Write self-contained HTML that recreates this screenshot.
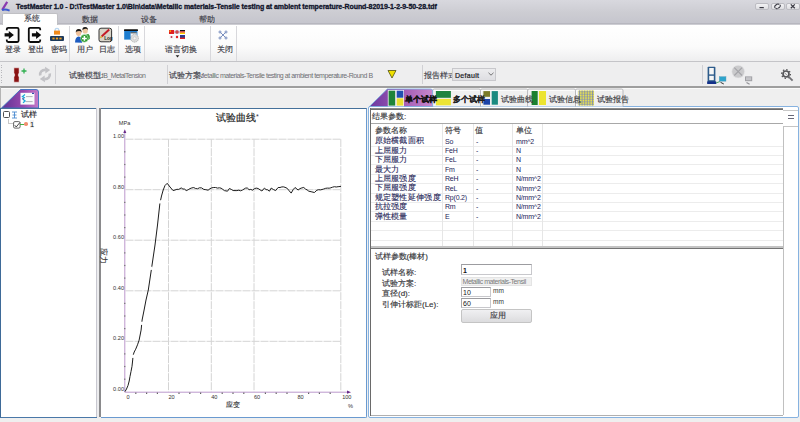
<!DOCTYPE html>
<html><head><meta charset="utf-8">
<style>
*{box-sizing:border-box;margin:0;padding:0}
html,body{width:800px;height:422px;overflow:hidden;background:#f0f0f0;font-family:"Liberation Sans",sans-serif;color:#222}
.a{position:absolute}
.t{position:absolute;white-space:nowrap;line-height:1}
#title{left:0;top:0;width:800px;height:25px;background:linear-gradient(#d8d8de 0px,#cdcdd3 12px,#c6c6ce 22.5px,#b6b6be 23px,#b8b8c0 24px,#e2e2e6 25px)}
#tabrow{display:none}
#ribbon{left:0;top:25px;width:800px;height:37px;background:linear-gradient(#ffffff 0%,#fbfbfb 60%,#eeeeef 100%);border-bottom:1px solid #c4c4c8}
#tool{left:0;top:62px;width:800px;height:24px;background:#eeeeef}
#main{left:0;top:85.5px;width:800px;height:336.5px;background:#efefef;border-top:2px solid #9e9e9e}
.sep{position:absolute;width:1px;background:#d8d8dc}
.cj{font-size:8px;letter-spacing:0px;color:#3c3c46;-webkit-text-stroke:0.15px #3c3c46}
.rt{font-size:7px;letter-spacing:-0.2px;color:#1c1c58}
.inp{border:1px solid #c8c8cc;border-top:1.6px solid #9c9ca0;border-left:1.3px solid #a8a8ac;background:#fff}
.lbl{font-size:7px;color:#333}
.wbtn{position:absolute;top:2.6px;height:7px;border:1px solid #bcbcc2;border-radius:2px;background:linear-gradient(#f2f2f4,#dedee2)}
</style></head><body>

<!-- title bar -->
<div id="title" class="a"></div>
<svg class="a" style="left:1px;top:1px" width="10" height="11" viewBox="0 0 10 11">
<path d="M6.2 0.8 L1.2 8.8" fill="none" stroke="#8a3ab0" stroke-width="2.2"/>
<path d="M1 9.2 Q4 7.6 8.6 9.6" fill="none" stroke="#3a5ad0" stroke-width="1.8"/>
</svg>
<div class="t" style="left:16px;top:3px;font-size:7px;font-weight:bold;color:#10142a;letter-spacing:-0.056px;-webkit-text-stroke:0.3px #10142a">TestMaster 1.0 - D:\TestMaster 1.0\Bin\data\Metallic materials-Tensile testing at ambient temperature-Round-82019-1-2-9-50-28.tdf</div>
<div class="wbtn" style="left:754.5px;width:14px"></div>
<div class="wbtn" style="left:770.5px;width:14px"></div>
<div class="wbtn" style="left:786px;width:14px"></div>
<svg class="a" style="left:754px;top:2px" width="46" height="10" viewBox="754 2 46 10">
<path d="M759.5 7.6 H763.8" stroke="#3a3a44" stroke-width="1.2"/>
<path d="M775.2 7.8 Q774 6.5 775.6 5.3 L777 4.3 Q778.4 3.6 779.3 4.6 M777.6 8.4 Q776.6 9.2 775.6 8.2 M780 4.8 Q781 6 779.6 7.2 L778.2 8.2" fill="none" stroke="#3a3a44" stroke-width="1.1"/>
<path d="M790.8 4.4 L794.8 8.2 M794.8 4.4 L790.8 8.2" stroke="#3a3a44" stroke-width="1.3"/>
</svg>

<!-- tab row -->
<div id="tabrow" class="a"></div>
<div class="a" style="left:2px;top:13px;width:56px;height:13px;background:#fff;border:1px solid #c0c0c4;border-bottom:none;border-radius:2px 2px 0 0"></div>
<div class="t cj" style="left:24px;top:15px">系统</div>
<div class="t cj" style="left:82px;top:16px">数据</div>
<div class="t cj" style="left:141px;top:16px">设备</div>
<div class="t cj" style="left:199px;top:16px">帮助</div>

<!-- ribbon -->
<div id="ribbon" class="a"></div>
<div class="sep" style="left:69px;top:26px;height:35px"></div>
<div class="sep" style="left:118px;top:26px;height:35px"></div>
<div class="sep" style="left:144px;top:26px;height:35px"></div>
<div class="sep" style="left:210px;top:26px;height:35px"></div>
<div class="sep" style="left:236px;top:26px;height:35px"></div>


<!-- ribbon icons -->
<svg class="a" style="left:4px;top:26px" width="17" height="18" viewBox="0 0 17 18">
<path d="M2.8 4.2 V3 Q2.8 1.8 4.2 1.8 H13.2 Q14.6 1.8 14.6 3.2 V14.6 Q14.6 16 13.2 16 H4.2 Q2.8 16 2.8 14.6 V13.4" fill="none" stroke="#0c0c0c" stroke-width="1.8"/>
<path d="M0.6 7.3 H4.8 V4.9 L9.9 8.9 L4.8 12.9 V10.5 H0.6 Z" fill="#0c0c0c"/>
</svg>
<svg class="a" style="left:27px;top:26px" width="17" height="18" viewBox="0 0 17 18">
<path d="M13.2 4.2 V3 Q13.2 1.8 11.8 1.8 H3.2 Q1.8 1.8 1.8 3.2 V14.6 Q1.8 16 3.2 16 H11.8 Q13.2 16 13.2 14.6 V13.4" fill="none" stroke="#0c0c0c" stroke-width="1.8"/>
<path d="M4.9 7.3 H9.1 V4.9 L14.2 8.9 L9.1 12.9 V10.5 H4.9 Z" fill="#0c0c0c"/>
</svg>
<svg class="a" style="left:49px;top:26px" width="16" height="16" viewBox="0 0 16 16">
<path d="M6.2 5 V4 Q6.2 2.4 8 2.4 Q9.8 2.4 9.8 4 V5" fill="none" stroke="#bcd8f0" stroke-width="1.3"/>
<rect x="5" y="4.6" width="6" height="4" fill="#f08a1c"/>
<rect x="1" y="10" width="14" height="5" rx="1" fill="#1c3a5c"/>
<rect x="3.4" y="11.6" width="2.2" height="1.8" fill="#f5a020"/>
<rect x="6.9" y="11.6" width="2.2" height="1.8" fill="#f5a020"/>
<rect x="10.4" y="11.6" width="2.2" height="1.8" fill="#f5a020"/>
</svg>
<svg class="a" style="left:72px;top:25px" width="22" height="20" viewBox="72 25 22 20">
<path d="M84 38 Q86 33.5 88.5 34 Q90.5 35.5 89.8 39 L88 40 Z" fill="#3aa03a"/>
<ellipse cx="85.2" cy="30.4" rx="2.6" ry="3.2" fill="#eec8a0"/>
<path d="M82.4 30 Q82.2 26.8 85.2 26.9 Q88.2 27 88 30.2 L87.2 29 Q85 28.4 83.2 29.4 Z" fill="#1a1a1a"/>
<path d="M75 42.5 Q75.2 37 78.6 36.6 Q82 37 82.6 40.5 L82 42.8 Z" fill="#1e5cc0"/>
<ellipse cx="78.6" cy="32.6" rx="2.7" ry="3.4" fill="#eec09a"/>
<path d="M75.8 32.4 Q75.6 28.8 78.8 28.9 Q82 29 81.6 32.8 L80.8 31.2 Q78.5 30.4 76.6 31.6 Z" fill="#1a1a1a"/>
<circle cx="84.4" cy="38.4" r="3.8" fill="#2a9a2a" stroke="#dff2df" stroke-width="0.5"/>
<path d="M84.4 36 V40.8 M82 38.4 H86.8" stroke="#fff" stroke-width="1.5"/>
</svg>
<svg class="a" style="left:98px;top:27px" width="15" height="16" viewBox="0 0 15 16">
<rect x="1" y="1.2" width="12.6" height="13.6" rx="2" fill="#d8d4c8" stroke="#333" stroke-width="1"/>
<path d="M3.6 9.6 L11.2 2.6" stroke="#c41c28" stroke-width="2"/>
<path d="M2.4 10.8 L3.8 9.4" stroke="#e0b030" stroke-width="1.6"/>
<text x="6.2" y="12.8" font-size="4.6" font-family="Liberation Sans" font-weight="bold" fill="#222">Log</text>
</svg>
<svg class="a" style="left:123px;top:28px" width="16" height="16" viewBox="0 0 16 16">
<rect x="1" y="1.2" width="14" height="1.8" rx="0.6" fill="#111"/>
<rect x="1.2" y="3" width="13.2" height="8.6" fill="#1f7ed0"/>
<rect x="7.6" y="4.4" width="6" height="4.4" fill="#f2f6fa"/>
<rect x="7.6" y="4.4" width="6" height="0.9" fill="#333"/>
<circle cx="11.6" cy="10.3" r="3.9" fill="#dcdcdc" stroke="#a8a8a8" stroke-width="0.7" stroke-dasharray="1.2 0.6"/>
<circle cx="11.6" cy="10.3" r="1.5" fill="#f4f4f4" stroke="#b8b8b8" stroke-width="0.5"/>
</svg>
<svg class="a" style="left:168px;top:29px" width="18" height="11" viewBox="0 0 18 11">
<rect x="1" y="1" width="5" height="4" fill="#e02020"/><rect x="1.5" y="1.5" width="1.5" height="1.2" fill="#ffd000"/>
<rect x="6.5" y="1" width="5" height="4" fill="#c8d0e8"/><path d="M6.5 3 H11.5 M9 1 V5" stroke="#d02020" stroke-width="1"/>
<rect x="12" y="1" width="5" height="1.4" fill="#111"/><rect x="12" y="2.4" width="5" height="1.3" fill="#e02020"/><rect x="12" y="3.7" width="5" height="1.3" fill="#ffd000"/>
<rect x="1" y="6" width="5" height="4" fill="#f8f8f8"/><circle cx="3.5" cy="8" r="1" fill="#c03050"/>
<rect x="6.5" y="6" width="5" height="4" fill="#f8f8f8"/><circle cx="9" cy="8" r="1.2" fill="#e02020"/>
<rect x="12" y="6" width="5" height="4" fill="#2a3a90"/><rect x="12" y="8.6" width="5" height="1.4" fill="#e02020"/>
</svg>
<svg class="a" style="left:174.5px;top:54.5px" width="5" height="3" viewBox="0 0 5 3"><path d="M0.6 0.3 H4.4 L2.5 2.6Z" fill="#222"/></svg>
<svg class="a" style="left:218px;top:30px" width="10" height="10" viewBox="0 0 10 10">
<path d="M2.6 2.6 L7.4 7.4 M7.4 2.6 L2.6 7.4" stroke="#5a74b0" stroke-width="0.8"/>
<circle cx="2" cy="2" r="1.05" fill="none" stroke="#5a74b0" stroke-width="0.75"/>
<circle cx="8" cy="2" r="1.05" fill="none" stroke="#5a74b0" stroke-width="0.75"/>
<circle cx="2" cy="8" r="1.05" fill="none" stroke="#5a74b0" stroke-width="0.75"/>
<circle cx="8" cy="8" r="1.05" fill="none" stroke="#5a74b0" stroke-width="0.75"/>
</svg>
<div class="t cj" style="left:5px;top:46px">登录</div>
<div class="t cj" style="left:28px;top:46px">登出</div>
<div class="t cj" style="left:51px;top:46px">密码</div>
<div class="t cj" style="left:77px;top:46px">用户</div>
<div class="t cj" style="left:99px;top:46px">日志</div>
<div class="t cj" style="left:125px;top:46px">选项</div>
<div class="t cj" style="left:165px;top:46px">语言切换</div>
<div class="t cj" style="left:217px;top:46px">关闭</div>

<!-- toolbar -->
<div id="tool" class="a"></div>
<div class="sep" style="left:55px;top:65px;height:19px;background:#d0d0d4"></div>
<div class="sep" style="left:167px;top:65px;height:19px;background:#d0d0d4"></div>
<div class="sep" style="left:422px;top:65px;height:19px;background:#d0d0d4"></div>
<div class="sep" style="left:702px;top:65px;height:19px;background:#d0d0d4"></div>


<!-- toolbar content -->
<div class="a" style="left:1px;top:65px;width:1px;height:18px;background:repeating-linear-gradient(#b8b8bc 0 1px,transparent 1px 2.5px)"></div>
<svg class="a" style="left:13px;top:67px" width="7" height="16" viewBox="0 0 7 16">
<path d="M0.9 0.8 H6.1 V5.8 Q4.3 8 6.1 10.2 V15.2 H0.9 V10.2 Q2.7 8 0.9 5.8 Z" fill="#8a1212" stroke="#ffffff" stroke-width="0.5"/>
</svg>
<svg class="a" style="left:21px;top:68px" width="6" height="6" viewBox="0 0 6 6"><path d="M3 0.5 V5.5 M0.5 3 H5.5" stroke="#30b050" stroke-width="1.3"/></svg>
<svg class="a" style="left:38px;top:65.5px" width="14" height="17" viewBox="0 0 14 17">
<path d="M2.2 9.5 Q1.6 4.2 7.6 3.8" fill="none" stroke="#c2c2c6" stroke-width="2.6"/>
<path d="M7 0.8 L12.2 4 L7.4 7.6 Z" fill="#c2c2c6"/>
<path d="M11.8 7.5 Q12.4 12.8 6.4 13.2" fill="none" stroke="#c2c2c6" stroke-width="2.6"/>
<path d="M7 16.2 L1.8 13 L6.6 9.4 Z" fill="#c2c2c6"/>
</svg>
<div class="t cj" style="left:69px;top:72px;color:#3a3a46">试验模型:</div>
<div class="t" style="left:98.5px;top:71.5px;font-size:7px;letter-spacing:-0.55px;color:#6e6e74">LIB_MetalTension</div>
<div class="t cj" style="left:169px;top:72px;color:#3a3a46">试验方案:</div>
<div class="t" style="left:198.5px;top:71.5px;font-size:7px;letter-spacing:-0.47px;color:#6e6e74">Metallic materials-Tensile testing at ambient temperature-Round B</div>
<svg class="a" style="left:387px;top:69px" width="10" height="10" viewBox="0 0 10 10"><path d="M1 1.5 H9 L5 9 Z" fill="#f0e000" stroke="#505010" stroke-width="0.8"/></svg>
<div class="t cj" style="left:424px;top:72px;color:#3a3a46">报告样式:</div>
<div class="a" style="left:452px;top:68px;width:44px;height:13px;border:1px solid #c8c8cc;background:linear-gradient(#ececee,#dedee2)"></div>
<div class="t" style="left:455px;top:72px;font-size:7px;letter-spacing:0.3px;color:#1a1a24;-webkit-text-stroke:0.2px #1a1a24">Default</div>
<svg class="a" style="left:488px;top:72px" width="6" height="4" viewBox="0 0 6 4"><path d="M0.5 0.8 L3 3.2 L5.5 0.8" fill="none" stroke="#555" stroke-width="0.8"/></svg>
<svg class="a" style="left:704px;top:62px" width="52" height="24" viewBox="704 62 52 24">
<rect x="707.6" y="66.8" width="7.8" height="17" rx="0.8" fill="#2e5c8c"/>
<rect x="709.2" y="68" width="4.6" height="6.4" fill="#f6f6f6"/>
<rect x="709.2" y="75.8" width="4.6" height="4.4" fill="#f6f6f6"/>
<rect x="707.2" y="81.4" width="9" height="2.6" fill="#13308a"/>
<path d="M716 83 L720 81.5" stroke="#3a9a5a" stroke-width="0.9"/>
<rect x="719.2" y="76.6" width="6.8" height="4.6" fill="#2ea4cc" stroke="#6aa0b8" stroke-width="0.4"/>
<path d="M720.5 82.3 L723.8 84" stroke="#333" stroke-width="1"/>
<circle cx="738.2" cy="71.6" r="6.4" fill="#cacacc" stroke="#e8e8ea" stroke-width="0.6"/>
<path d="M734.3 67.7 L742.1 75.5 M742.1 67.7 L734.3 75.5" stroke="#a4a4a8" stroke-width="1.1"/>
<rect x="745" y="76.4" width="7.2" height="4.8" fill="#a0a0a4"/>
<rect x="746" y="77.2" width="5.2" height="3" fill="#c4c4c8"/>
<path d="M746.5 82.5 L749.6 84.2" stroke="#909094" stroke-width="1.2"/>
</svg>
<svg class="a" style="left:780px;top:68px" width="14" height="14" viewBox="0 0 14 14">
<circle cx="6" cy="6" r="4.4" fill="none" stroke="#555558" stroke-width="1.3" stroke-dasharray="1.4 2"/>
<circle cx="6" cy="6" r="3" fill="none" stroke="#555558" stroke-width="1.7"/>
<path d="M5 5.2 L6.6 6.8" stroke="#666" stroke-width="0.8"/>
<path d="M8.3 8.3 L12.6 12.6" stroke="#707074" stroke-width="1.8"/>
</svg>

<!-- main -->
<div id="main" class="a"></div>


<div class="a" style="left:0;top:88px;width:800px;height:1px;background:#fafafa"></div>
<!-- left tab -->
<svg class="a" style="left:0;top:88px" width="42" height="22" viewBox="0 0 42 22">
<defs><linearGradient id="pg" x1="0" x2="1"><stop offset="0" stop-color="#5e3294"/><stop offset="0.6" stop-color="#9a4aae"/><stop offset="1" stop-color="#c47ac8"/></linearGradient></defs>
<path d="M1.5 20 L20.5 1.5 H36 Q38.5 1.5 38.5 4 V20 Z" fill="url(#pg)" stroke="#3a70c0" stroke-width="0.9"/>
</svg>
<svg class="a" style="left:20px;top:92px" width="16" height="14" viewBox="0 0 16 14">
<rect x="0.5" y="0.8" width="14" height="11.8" fill="#f8fbfb"/>
<path d="M5 2.5 L2.4 4.6 L5 6" fill="none" stroke="#18a8d8" stroke-width="1.2"/>
<path d="M3 7.2 L5.2 9 L3 10.8" fill="none" stroke="#18a8d8" stroke-width="1.2"/>
<rect x="2.2" y="6.3" width="1.6" height="1" fill="#1a2a80"/>
<path d="M6 4.6 H12.6 M6 9.6 H12.6" stroke="#a8a8b0" stroke-width="0.9"/>
<rect x="12" y="0.8" width="2" height="1.2" fill="#3050b0"/>
</svg>
<!-- left panel -->
<div class="a" style="left:0;top:107.6px;width:97px;height:310.2px;background:#fff;border-left:1.8px solid #3e6a98;border-top:1.5px solid #44709a;border-bottom:1.4px solid #4a78a8"></div>
<div class="a" style="left:96px;top:108px;width:1px;height:309px;background:#c8c8d0"></div>
<div class="a" style="left:97px;top:108px;width:2px;height:310px;background:#ececee"></div>
<div class="a" style="left:99px;top:108px;width:1.5px;height:309px;background:#8a8a8c"></div>
<div class="a" style="left:0;top:87px;width:1px;height:21px;background:#b4b4b4"></div>
<!-- tree -->
<div class="a" style="left:3.3px;top:110.6px;width:6.8px;height:7px;border:1.2px solid #505050;border-radius:1.5px;background:#fff"></div>
<svg class="a" style="left:11px;top:111px" width="7" height="8" viewBox="0 0 7 8"><path d="M1 1 H6 M1 7 H6 M3.5 1 V7 M1.5 4 H5.5" stroke="#4a8ad0" stroke-width="0.9"/></svg>
<div class="t cj" style="left:20.5px;top:111.3px;color:#222">试样</div>
<div class="a" style="left:7.5px;top:119px;width:5px;height:5px;border-left:1px solid #c8c8c8;border-bottom:1px solid #c8c8c8"></div>
<svg class="a" style="left:12.5px;top:120.5px" width="8" height="8" viewBox="0 0 8 8"><rect x="0.6" y="0.6" width="6.5" height="6.5" rx="1.3" fill="#fff" stroke="#555" stroke-width="0.9"/><path d="M1.8 4.2 L3.2 6 L6.8 1.6" fill="none" stroke="#333" stroke-width="0.9"/></svg>
<div class="a" style="left:20px;top:123.5px;width:4px;height:1px;background:#40b040"></div>
<div class="a" style="left:24px;top:122px;width:3.5px;height:3.5px;border-radius:50%;background:#f09070"></div>
<div class="a" style="left:29.5px;top:120px;width:4.5px;height:8px;background:#f2f2f2"></div>
<div class="t" style="left:30px;top:120.5px;font-size:7.5px;color:#111">1</div>
<!-- chart panel -->
<div class="a" style="left:100.5px;top:107.6px;width:266.5px;height:310.2px;background:#fff;border-top:1.5px solid #44709a;border-right:1.2px solid #6a9ad0;border-bottom:1.2px solid #6a9ad0;border-radius:0 0 2px 0"></div>

<!-- CHART -->
<svg class="a" style="left:100px;top:108px" width="267" height="310" viewBox="100 108 267 310">
<path d="M125.5 341.3 H341" stroke="#d4d4d4" stroke-width="1" stroke-dasharray="8 1"/>
<path d="M125.5 290.8 H341" stroke="#d4d4d4" stroke-width="1" stroke-dasharray="8 1"/>
<path d="M125.5 240.2 H341" stroke="#d4d4d4" stroke-width="1" stroke-dasharray="8 1"/>
<path d="M125.5 189.7 H341" stroke="#d4d4d4" stroke-width="1" stroke-dasharray="8 1"/>
<path d="M125.5 139.2 H341" stroke="#d4d4d4" stroke-width="1" stroke-dasharray="8 1"/>
<path d="M168.5 139.2 V391.5" stroke="#d4d4d4" stroke-width="1" stroke-dasharray="8 1"/>
<path d="M211.3 139.2 V391.5" stroke="#d4d4d4" stroke-width="1" stroke-dasharray="8 1"/>
<path d="M254 139.2 V391.5" stroke="#d4d4d4" stroke-width="1" stroke-dasharray="8 1"/>
<path d="M340.8 139.2 V391.5" stroke="#d4d4d4" stroke-width="1" stroke-dasharray="8 1"/>
<path d="M124.8 131 V392.2 H349" stroke="#bc98cc" stroke-width="1" fill="none"/>
<path d="M123.3 133 L124.8 129.3 L126.3 133 Z" fill="#6a2a8a"/>
<path d="M347 390.6 L351 392.2 L347 393.8 Z" fill="#6a2a8a"/>
<rect x="135.2" y="392.6" width="1.2" height="1.3" fill="#555"/>
<rect x="146.0" y="392.6" width="1.2" height="1.3" fill="#555"/>
<rect x="156.8" y="392.6" width="1.2" height="1.3" fill="#555"/>
<rect x="178.4" y="392.6" width="1.2" height="1.3" fill="#555"/>
<rect x="189.2" y="392.6" width="1.2" height="1.3" fill="#555"/>
<rect x="200.0" y="392.6" width="1.2" height="1.3" fill="#555"/>
<rect x="221.6" y="392.6" width="1.2" height="1.3" fill="#555"/>
<rect x="232.4" y="392.6" width="1.2" height="1.3" fill="#555"/>
<rect x="243.2" y="392.6" width="1.2" height="1.3" fill="#555"/>
<rect x="264.8" y="392.6" width="1.2" height="1.3" fill="#555"/>
<rect x="275.6" y="392.6" width="1.2" height="1.3" fill="#555"/>
<rect x="286.4" y="392.6" width="1.2" height="1.3" fill="#555"/>
<rect x="308.0" y="392.6" width="1.2" height="1.3" fill="#555"/>
<rect x="318.8" y="392.6" width="1.2" height="1.3" fill="#555"/>
<rect x="329.6" y="392.6" width="1.2" height="1.3" fill="#555"/>
<rect x="124.1" y="378.6" width="1.3" height="1.2" fill="#777"/>
<rect x="124.1" y="365.9" width="1.3" height="1.2" fill="#777"/>
<rect x="124.1" y="353.3" width="1.3" height="1.2" fill="#777"/>
<rect x="124.1" y="328.0" width="1.3" height="1.2" fill="#777"/>
<rect x="124.1" y="315.4" width="1.3" height="1.2" fill="#777"/>
<rect x="124.1" y="302.8" width="1.3" height="1.2" fill="#777"/>
<rect x="124.1" y="277.5" width="1.3" height="1.2" fill="#777"/>
<rect x="124.1" y="264.9" width="1.3" height="1.2" fill="#777"/>
<rect x="124.1" y="252.3" width="1.3" height="1.2" fill="#777"/>
<rect x="124.1" y="227.0" width="1.3" height="1.2" fill="#777"/>
<rect x="124.1" y="214.4" width="1.3" height="1.2" fill="#777"/>
<rect x="124.1" y="201.8" width="1.3" height="1.2" fill="#777"/>
<rect x="124.1" y="176.5" width="1.3" height="1.2" fill="#777"/>
<rect x="124.1" y="163.9" width="1.3" height="1.2" fill="#777"/>
<rect x="124.1" y="151.2" width="1.3" height="1.2" fill="#777"/>
<text x="124" y="138.0" text-anchor="end" font-size="5.6" font-family="Liberation Sans" fill="#333">1.00</text>
<text x="124" y="188.5" text-anchor="end" font-size="5.6" font-family="Liberation Sans" fill="#333">0.80</text>
<text x="124" y="239.0" text-anchor="end" font-size="5.6" font-family="Liberation Sans" fill="#333">0.60</text>
<text x="124" y="289.6" text-anchor="end" font-size="5.6" font-family="Liberation Sans" fill="#333">0.40</text>
<text x="124" y="340.1" text-anchor="end" font-size="5.6" font-family="Liberation Sans" fill="#333">0.20</text>
<text x="124" y="390.6" text-anchor="end" font-size="5.6" font-family="Liberation Sans" fill="#333">0.00</text>
<text x="128.0" y="398.6" text-anchor="middle" font-size="5.6" font-family="Liberation Sans" fill="#333">0</text>
<text x="171.5" y="398.6" text-anchor="middle" font-size="5.6" font-family="Liberation Sans" fill="#333">20</text>
<text x="214.3" y="398.6" text-anchor="middle" font-size="5.6" font-family="Liberation Sans" fill="#333">40</text>
<text x="257.0" y="398.6" text-anchor="middle" font-size="5.6" font-family="Liberation Sans" fill="#333">60</text>
<text x="300.5" y="398.6" text-anchor="middle" font-size="5.6" font-family="Liberation Sans" fill="#333">80</text>
<text x="346.8" y="398.6" text-anchor="middle" font-size="5.6" font-family="Liberation Sans" fill="#333">100</text>
<text x="350.5" y="408" text-anchor="middle" font-size="5.6" font-family="Liberation Sans" fill="#333">%</text>
<text x="124.5" y="125" font-size="5.6" text-anchor="middle" font-family="Liberation Sans" fill="#333">MPa</text>
<path d="M125.0 391.6 L126.5 389.0 L128.0 385.5 L129.2 381.0 L130.0 376.4 L131.0 371.5 L132.0 366.3 L132.7 360.0 L133.1 355.3 L134.2 352.0 L135.7 349.2 L137.5 344.8 L139.1 340.2 L141.1 330.1 L142.1 320.0 L144.1 310.0 L146.0 300.0 L148.3 290.0 L151.4 269.4 L155.0 245.0 L157.5 225.0 L159.9 203.3 L161.5 196.0 L163.2 190.0 L165.0 185.5 L167.2 183.3 L170.0 187.0 L173.1 190.6 L175.0 190.0 L176.9 189.3 L178.8 189.4 L181.2 187.9 L182.9 189.0 L184.6 189.1 L186.2 190.6 L188.1 189.8 L190.0 188.6 L191.9 187.9 L193.8 187.6 L195.6 188.5 L197.5 188.8 L199.4 187.8 L201.6 187.9 L203.8 189.4 L205.9 189.7 L208.1 190.2 L210.0 188.7 L211.9 187.8 L213.8 187.5 L215.6 187.5 L217.5 188.1 L219.4 187.8 L221.1 188.2 L222.7 189.3 L224.4 190.6 L227.5 191.2 L229.4 188.5 L231.3 189.4 L233.1 190.5 L235.0 190.6 L236.9 190.6 L238.8 190.2 L240.6 190.8 L242.5 190.0 L245.6 188.1 L247.3 188.0 L249.1 189.7 L250.8 189.4 L252.5 190.2 L254.4 188.7 L256.2 188.1 L258.1 188.5 L260.0 189.8 L261.9 191.0 L264.4 188.1 L266.1 189.6 L267.7 189.8 L269.4 191.2 L271.2 188.1 L273.4 189.5 L275.6 190.6 L278.1 187.5 L280.0 187.5 L281.9 186.9 L283.8 186.9 L286.9 188.1 L289.1 190.7 L291.2 193.1 L293.1 189.7 L295.0 187.5 L298.1 190.0 L300.0 188.6 L301.9 187.9 L303.8 187.5 L305.4 189.0 L307.1 189.9 L308.8 191.2 L311.9 191.9 L314.4 192.5 L316.9 190.2 L318.6 189.7 L320.3 189.9 L322.0 189.5 L323.8 189.0 L325.7 188.3 L327.5 188.1 L329.2 188.2 L330.8 187.8 L332.5 187.2 L334.4 186.7 L336.2 187.0 L338.1 186.7 L340.0 186.5 L341.0 186.3" fill="none" stroke="#1c1c1c" stroke-width="1" stroke-linejoin="round"/>
<rect x="158.7" y="200.2" width="3" height="3.2" fill="#fff"/>
<rect x="149.7" y="266.7" width="3" height="3.2" fill="#fff"/>
<rect x="140.9" y="321.7" width="3" height="3.2" fill="#fff"/>
<rect x="131.6" y="354.7" width="3" height="3.2" fill="#fff"/>
</svg>
<div class="t cj" style="left:216px;top:113px;font-size:9.5px;letter-spacing:0px;color:#222;-webkit-text-stroke:0.15px #222">试验曲线<span style="-webkit-text-stroke:0;font-size:7px;color:#334;vertical-align:top">*</span></div>
<div class="t cj" style="top:248px;font-size:7.5px;color:#333;transform:rotate(90deg);transform-origin:left top;left:106.5px">应力</div>
<div class="t cj" style="left:226px;top:401px;font-size:7px;color:#333">应变</div>
<!-- /CHART -->
<!-- RIGHT -->
<div class="a" style="left:368px;top:106px;width:431px;height:312px;border:1.2px solid #86b2e0;border-radius:2px;background:#fff"></div>
<div class="a" style="left:369.5px;top:108px;width:413px;height:2.2px;background:linear-gradient(#9a9a9a,#5e5e5e)"></div>
<div class="a" style="left:369.5px;top:108px;width:1.6px;height:308px;background:#6a6a6a"></div>
<div class="a" style="left:371px;top:415px;width:412px;height:1px;background:#b0b0b0"></div>
<div class="a" style="left:782.5px;top:110px;width:15px;height:1px;background:#c8c8c8"></div>
<div class="a" style="left:788px;top:115px;width:6px;height:1px;background:#686878"></div>
<div class="a" style="left:788px;top:118px;width:6px;height:1px;background:#686878"></div>
<div class="a" style="left:782.5px;top:126px;width:15px;height:1px;background:#c4c4c4"></div>
<div class="a" style="left:783px;top:126px;width:1px;height:289px;background:#c0c0c0"></div>
<div class="t cj" style="left:372px;top:113px;color:#333">结果参数:</div>
<div class="a" style="left:371px;top:123px;width:411.5px;height:1px;background:#a8a8a8"></div>
<div class="a" style="left:371px;top:145.6px;width:411.5px;height:1px;background:#ececec"></div>
<div class="a" style="left:371px;top:155.0px;width:411.5px;height:1px;background:#ececec"></div>
<div class="a" style="left:371px;top:164.4px;width:411.5px;height:1px;background:#ececec"></div>
<div class="a" style="left:371px;top:173.8px;width:411.5px;height:1px;background:#ececec"></div>
<div class="a" style="left:371px;top:183.2px;width:411.5px;height:1px;background:#ececec"></div>
<div class="a" style="left:371px;top:192.6px;width:411.5px;height:1px;background:#ececec"></div>
<div class="a" style="left:371px;top:202.0px;width:411.5px;height:1px;background:#ececec"></div>
<div class="a" style="left:371px;top:211.4px;width:411.5px;height:1px;background:#ececec"></div>
<div class="a" style="left:371px;top:220.8px;width:411.5px;height:1px;background:#ececec"></div>
<div class="a" style="left:371px;top:230.2px;width:411.5px;height:1px;background:#ececec"></div>
<div class="a" style="left:371px;top:239.6px;width:411.5px;height:1px;background:#ececec"></div>
<div class="a" style="left:442.2px;top:124px;width:1px;height:122px;background:#e6e6e6"></div>
<div class="a" style="left:472.5px;top:124px;width:1px;height:122px;background:#e6e6e6"></div>
<div class="a" style="left:512px;top:124px;width:1px;height:122px;background:#e6e6e6"></div>
<div class="a" style="left:542.2px;top:124px;width:1px;height:122px;background:#e6e6e6"></div>
<div class="t cj" style="left:374.5px;top:127px;color:#333">参数名称</div>
<div class="t cj" style="left:444.5px;top:127px;color:#333">符号</div>
<div class="t cj" style="left:475px;top:127px;color:#333">值</div>
<div class="t cj" style="left:515.5px;top:127px;color:#333">单位</div>
<div class="t cj" style="left:374.5px;top:137.4px;color:#2c2c5c;-webkit-text-stroke-color:#2c2c5c;letter-spacing:0.3px">原始横截面积</div>
<div class="t rt" style="left:445px;top:137.6px">So</div>
<div class="t rt" style="left:476px;top:137.6px">-</div>
<div class="t rt" style="left:516px;top:137.6px">mm^2</div>
<div class="t cj" style="left:374.5px;top:146.8px;color:#2c2c5c;-webkit-text-stroke-color:#2c2c5c;letter-spacing:0.3px">上屈服力</div>
<div class="t rt" style="left:445px;top:147.0px">FeH</div>
<div class="t rt" style="left:476px;top:147.0px">-</div>
<div class="t rt" style="left:516px;top:147.0px">N</div>
<div class="t cj" style="left:374.5px;top:156.2px;color:#2c2c5c;-webkit-text-stroke-color:#2c2c5c;letter-spacing:0.3px">下屈服力</div>
<div class="t rt" style="left:445px;top:156.4px">FeL</div>
<div class="t rt" style="left:476px;top:156.4px">-</div>
<div class="t rt" style="left:516px;top:156.4px">N</div>
<div class="t cj" style="left:374.5px;top:165.6px;color:#2c2c5c;-webkit-text-stroke-color:#2c2c5c;letter-spacing:0.3px">最大力</div>
<div class="t rt" style="left:445px;top:165.8px">Fm</div>
<div class="t rt" style="left:476px;top:165.8px">-</div>
<div class="t rt" style="left:516px;top:165.8px">N</div>
<div class="t cj" style="left:374.5px;top:175.0px;color:#2c2c5c;-webkit-text-stroke-color:#2c2c5c;letter-spacing:0.3px">上屈服强度</div>
<div class="t rt" style="left:445px;top:175.2px">ReH</div>
<div class="t rt" style="left:476px;top:175.2px">-</div>
<div class="t rt" style="left:516px;top:175.2px">N/mm^2</div>
<div class="t cj" style="left:374.5px;top:184.4px;color:#2c2c5c;-webkit-text-stroke-color:#2c2c5c;letter-spacing:0.3px">下屈服强度</div>
<div class="t rt" style="left:445px;top:184.6px">ReL</div>
<div class="t rt" style="left:476px;top:184.6px">-</div>
<div class="t rt" style="left:516px;top:184.6px">N/mm^2</div>
<div class="t cj" style="left:374.5px;top:193.8px;color:#2c2c5c;-webkit-text-stroke-color:#2c2c5c;letter-spacing:0.3px">规定塑性延伸强度</div>
<div class="t rt" style="left:445px;top:194.0px">Rp(0.2)</div>
<div class="t rt" style="left:476px;top:194.0px">-</div>
<div class="t rt" style="left:516px;top:194.0px">N/mm^2</div>
<div class="t cj" style="left:374.5px;top:203.2px;color:#2c2c5c;-webkit-text-stroke-color:#2c2c5c;letter-spacing:0.3px">抗拉强度</div>
<div class="t rt" style="left:445px;top:203.4px">Rm</div>
<div class="t rt" style="left:476px;top:203.4px">-</div>
<div class="t rt" style="left:516px;top:203.4px">N/mm^2</div>
<div class="t cj" style="left:374.5px;top:212.6px;color:#2c2c5c;-webkit-text-stroke-color:#2c2c5c;letter-spacing:0.3px">弹性模量</div>
<div class="t rt" style="left:445px;top:212.8px">E</div>
<div class="t rt" style="left:476px;top:212.8px">-</div>
<div class="t rt" style="left:516px;top:212.8px">N/mm^2</div>
<div class="a" style="left:371px;top:246px;width:412px;height:1.6px;background:#c4c4c4"></div>
<div class="a" style="left:371px;top:248.2px;width:412px;height:1.2px;background:#747474"></div>
<div class="t cj" style="left:374.5px;top:252.5px;color:#333">试样参数(棒材)</div>
<div class="t cj" style="left:382px;top:268.5px;color:#333">试样名称:</div>
<div class="t cj" style="left:382px;top:279.5px;color:#333">试验方案:</div>
<div class="t cj" style="left:382px;top:289.5px;color:#333">直径(d):</div>
<div class="t cj" style="left:382px;top:301px;color:#333">引伸计标距(Le):</div>
<div class="a inp" style="left:461px;top:264px;width:70.5px;height:11px"></div>
<div class="t" style="left:463px;top:266.5px;font-size:7px;font-weight:bold;color:#111">1</div>
<div class="a" style="left:461px;top:276.5px;width:70.5px;height:9px;background:#f0f0f0;border:1px solid #e4e4e4"></div>
<div class="t" style="left:462.5px;top:277.5px;font-size:7px;letter-spacing:-0.44px;color:#7a7a7a">Metallic materials-Tensil</div>
<div class="a inp" style="left:461px;top:286.5px;width:30px;height:10.5px"></div>
<div class="t" style="left:463px;top:289px;font-size:7px;color:#111">10</div>
<div class="t" style="left:493px;top:287.5px;font-size:6.5px;color:#333">mm</div>
<div class="a inp" style="left:461px;top:297.5px;width:30px;height:10.5px"></div>
<div class="t" style="left:463px;top:300px;font-size:7px;color:#111">60</div>
<div class="t" style="left:493px;top:298.5px;font-size:6.5px;color:#333">mm</div>
<div class="a" style="left:461px;top:308.5px;width:70.5px;height:14px;border:1px solid #c4c4c4;border-radius:2px;background:linear-gradient(#f0f0f2,#dcdcde)"></div>
<div class="t cj" style="left:490px;top:312px;color:#333">应用</div>
<!-- /RIGHT -->
<!-- TABS -->
<svg class="a" style="left:366px;top:87px" width="262" height="22" viewBox="366 87 262 22">
<defs><linearGradient id="pg2" x1="0" x2="1"><stop offset="0" stop-color="#6a38a0"/><stop offset="0.5" stop-color="#a058b4"/><stop offset="1" stop-color="#c888cc"/></linearGradient></defs>
<path d="M432.8 106.5 V90.5 Q432.8 89 434.3 89 H479.0 Q480.5 89 480.5 90.5 V106.5" fill="#f0f0f0" stroke="#b4b4b8" stroke-width="0.9"/>
<path d="M433.8 106 V90.5 H479.5" fill="none" stroke="#ffffff" stroke-width="0.8"/>
<path d="M480.5 106.5 V90.5 Q480.5 89 482.0 89 H526.3 Q527.8 89 527.8 90.5 V106.5" fill="#f0f0f0" stroke="#b4b4b8" stroke-width="0.9"/>
<path d="M481.5 106 V90.5 H526.8" fill="none" stroke="#ffffff" stroke-width="0.8"/>
<path d="M527.8 106.5 V90.5 Q527.8 89 529.3 89 H574.0 Q575.5 89 575.5 90.5 V106.5" fill="#f0f0f0" stroke="#b4b4b8" stroke-width="0.9"/>
<path d="M528.8 106 V90.5 H574.5" fill="none" stroke="#ffffff" stroke-width="0.8"/>
<path d="M575.5 106.5 V90.5 Q575.5 89 577.0 89 H621.5 Q623 89 623 90.5 V106.5" fill="#f0f0f0" stroke="#b4b4b8" stroke-width="0.9"/>
<path d="M576.5 106 V90.5 H622" fill="none" stroke="#ffffff" stroke-width="0.8"/>
<path d="M369.4 106.5 L387.3 89 H430.5 Q432.6 89 432.6 91 V106.5 Z" fill="url(#pg2)" stroke="#80b0e0" stroke-width="0.9"/>
<rect x="387.8" y="90" width="16.2" height="16.3" fill="#fff" opacity="0.9"/>
<rect x="388.6" y="90.7" width="6.6" height="14.9" fill="#1e8438"/>
<rect x="396.7" y="90.7" width="6.6" height="7" fill="#2050b0"/>
<rect x="396.7" y="98.3" width="6.6" height="7.3" fill="#eae030"/>
<rect x="435.9" y="91" width="15" height="6.8" fill="#1e8440"/>
<rect x="435.9" y="98.9" width="15" height="6.4" fill="#ece434"/>
<rect x="483.4" y="91.1" width="6.6" height="5.7" fill="#7a7a28"/>
<rect x="483.4" y="99" width="6.6" height="5.7" fill="#1c44a8"/>
<rect x="491.7" y="91.1" width="6.2" height="13.6" fill="#1a8a80"/>
<rect x="531.6" y="91" width="6.1" height="14" fill="#1a8030"/>
<rect x="539" y="91" width="7" height="14" fill="#ece430"/>
<rect x="578.5" y="90.5" width="15.5" height="15" fill="#e8e050"/>
<path d="M579.5 90.5 V105.5" stroke="#7080b8" stroke-width="0.7"/>
<path d="M578.5 91.8 H594" stroke="#8090c0" stroke-width="0.6"/>
<path d="M582.1 90.5 V105.5" stroke="#7080b8" stroke-width="0.7"/>
<path d="M578.5 94.3 H594" stroke="#8090c0" stroke-width="0.6"/>
<path d="M584.7 90.5 V105.5" stroke="#7080b8" stroke-width="0.7"/>
<path d="M578.5 96.8 H594" stroke="#8090c0" stroke-width="0.6"/>
<path d="M587.3 90.5 V105.5" stroke="#7080b8" stroke-width="0.7"/>
<path d="M578.5 99.3 H594" stroke="#8090c0" stroke-width="0.6"/>
<path d="M589.9 90.5 V105.5" stroke="#7080b8" stroke-width="0.7"/>
<path d="M578.5 101.8 H594" stroke="#8090c0" stroke-width="0.6"/>
<path d="M592.5 90.5 V105.5" stroke="#7080b8" stroke-width="0.7"/>
<path d="M578.5 104.3 H594" stroke="#8090c0" stroke-width="0.6"/>
</svg>
<div class="t cj" style="left:405px;top:95.5px;font-size:8px;color:#111;-webkit-text-stroke:0.7px #111">单个试样</div>
<div class="t cj" style="left:453px;top:95.5px;color:#222;-webkit-text-stroke:0.6px #222">多个试样</div>
<div class="t cj" style="left:501px;top:95.5px;color:#333">试验曲线</div>
<div class="t cj" style="left:548.5px;top:95.5px;color:#333">试验信息</div>
<div class="t cj" style="left:596.5px;top:95.5px;color:#333">试验报告</div>
<!-- /TABS -->
</body></html>
